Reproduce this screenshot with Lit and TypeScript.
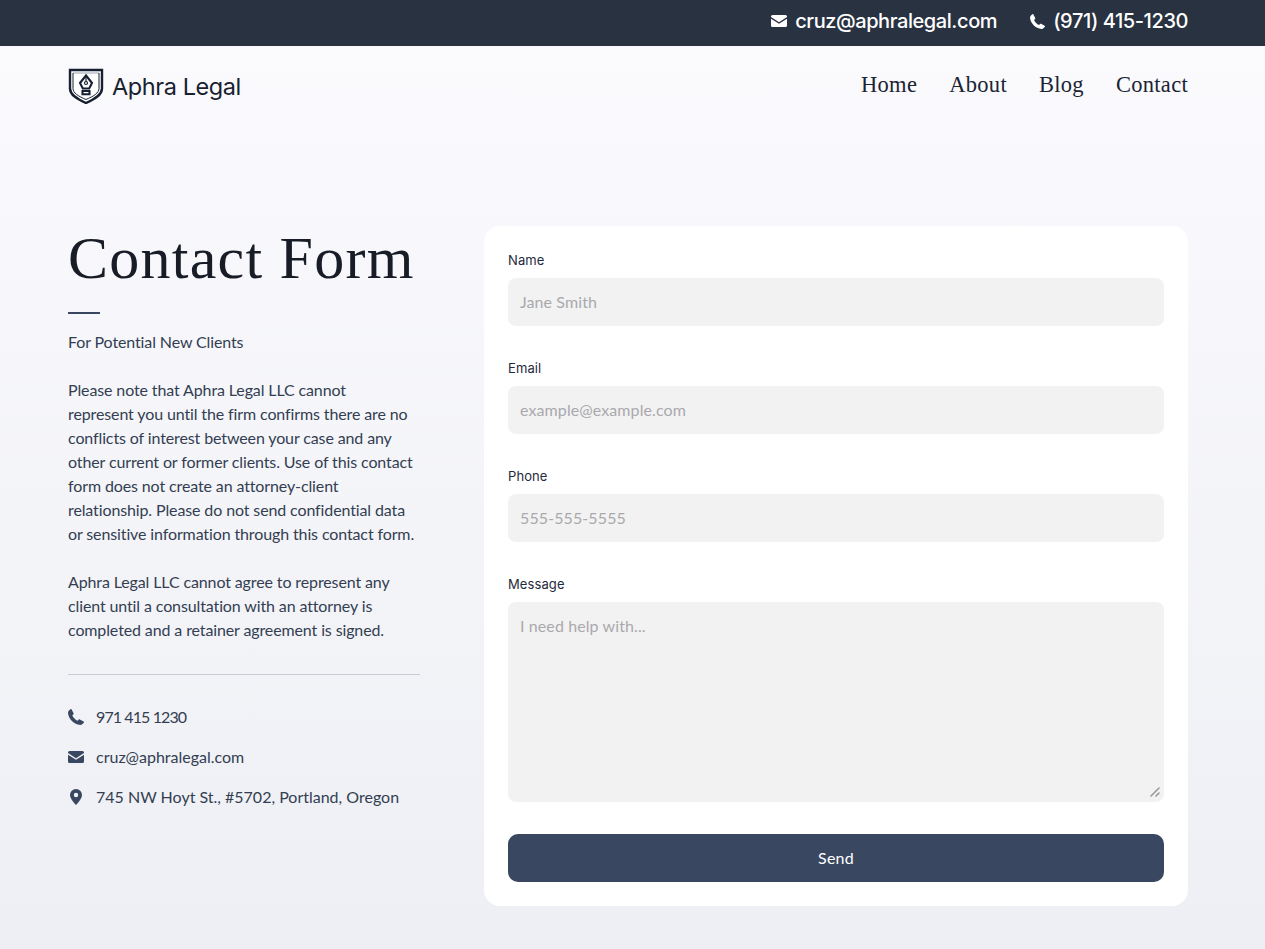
import { LitElement, html, css, svg } from "lit";
import { customElement } from "lit/decorators.js";

const phonePath =
  "M3.600.4l2 3.800c.2.4.1.8-.2 1.100L4.300 6.400c.8 2 3.300 4.500 5.300 5.300l1.100-1.100c.3-.3.7-.4 1.100-.2l3.800 2c.4.2.5.7.3 1.100C14.900 14.700 13.600 16 12.200 16 6 15.600.4 10 0 3.800 0 2.400 1.300 1.100 2.500.2c.4-.3.900-.2 1.100.2z";
const mailTop = "M0 1.500A1.500 1.500 0 0 1 1.500 0h13A1.500 1.500 0 0 1 16 1.500v.6L8 7.200 0 2.100z";
const mailBottom = "M0 3.700V10.500A1.500 1.500 0 0 0 1.500 12h13a1.500 1.500 0 0 0 1.500-1.500V3.700L8 8.800z";
const pinPath =
  "M6 0a6 6 0 0 0-6 6c0 4.200 6 10 6 10s6-5.800 6-10a6 6 0 0 0-6-6zm0 8.200a2.200 2.200 0 1 1 0-4.400 2.200 2.200 0 0 1 0 4.400z";

function icon(kind: string, size: number) {
  if (kind === "phone") {
    return html`<svg width=${size} height=${size} viewBox="0 0 16 16" fill="currentColor">
      ${svg`<path d=${phonePath}></path>`}
    </svg>`;
  }
  if (kind === "pin") {
    return html`<span class="slot"><svg width="12" height="16" viewBox="0 0 12 16" fill="currentColor">
      ${svg`<path fill-rule="evenodd" d=${pinPath}></path>`}
    </svg></span>`;
  }
  return html`<svg width=${size} height=${(size * 12) / 16} viewBox="0 0 16 12" fill="currentColor">
    ${svg`<path d=${mailTop}></path><path d=${mailBottom}></path>`}
  </svg>`;
}

const logo = html`<svg width="36" height="36" viewBox="0 0 36 36" fill="none" stroke="#172030">
  <path d="M2 2h32v18.500c0 6.500-7 10.500-16 14.500C9 31 2 27 2 20.500z" fill="#fff" stroke-width="2.400"></path>
  <path d="M5 5h26" stroke="#9aa1ad" stroke-width="1"></path>
  <path d="M5 5v15.500c0 4.500 5.500 7.800 13 11C25.500 28.300 31 25 31 20.500V5" stroke-width="1"></path>
  <path d="M18 7.500l6 7.500-2.800 5.500h-6.400L12 15z" stroke-width="2.100"></path>
  <path d="M18 8v5.500" stroke-width="1.200"></path>
  <circle cx="18" cy="15" r="1.500" stroke-width="1.200"></circle>
  <path d="M14.500 23h7v3.200h-7z" stroke-width="2.100"></path>
</svg>`;

const fields = [
  { label: "Name", placeholder: "Jane Smith" },
  { label: "Email", placeholder: "example@example.com" },
  { label: "Phone", placeholder: "555-555-5555" },
];

// line breaks follow the original layout, the fallback font wraps differently
const notice = [
  "Please note that Aphra Legal LLC cannot",
  "represent you until the firm confirms there are no",
  "conflicts of interest between your case and any",
  "other current or former clients. Use of this contact",
  "form does not create an attorney-client",
  "relationship. Please do not send confidential data",
  "or sensitive information through this contact form.",
];
const retainer = [
  "Aphra Legal LLC cannot agree to represent any",
  "client until a consultation with an attorney is",
  "completed and a retainer agreement is signed.",
];

@customElement("app-root")
export class AppRoot extends LitElement {
  static styles = css`
    :host {
      display: block;
      min-height: 949px;
      background: linear-gradient(180deg, #fbfbfe 0%, #eeeff4 100%);
      font-family: "Lato", "Liberation Sans", sans-serif;
      color: #333e52;
    }
    .topbar {
      height: 46px;
      box-sizing: border-box;
      padding: 0 77px 4px 68px;
      background: #293241;
      color: #fff;
      display: flex;
      justify-content: flex-end;
      align-items: center;
      gap: 33px;
      font-family: "Inter", sans-serif;
      font-size: 20px;
      font-weight: 500;
      letter-spacing: -0.42px;
    }
    .topbar a {
      display: flex;
      align-items: center;
      gap: 8px;
    }
    .nav {
      height: 80px;
      padding: 0 77px 0 68px;
      display: flex;
      justify-content: space-between;
      align-items: center;
    }
    .brand {
      display: flex;
      align-items: center;
      gap: 8px;
      font-family: "Inter", sans-serif;
      font-size: 23.5px;
      font-weight: 400;
      color: #182130;
      letter-spacing: -0.42px;
    }
    .links {
      display: flex;
      gap: 32px;
      font-family: "Liberation Serif", serif;
      font-size: 22.5px;
      font-weight: 400;
      letter-spacing: 0.3px;
      color: #1b2433;
      margin-top: -2px;
    }
    .main {
      display: flex;
      gap: 64px;
      padding: 100px 77px 43px 68px;
    }
    .intro {
      width: 352px;
      flex: none;
    }
    h1 {
      margin: 0;
      font-family: "Liberation Serif", serif;
      font-weight: 400;
      font-size: 60px;
      letter-spacing: 1.25px;
      line-height: 64px;
      color: #171c26;
      white-space: nowrap;
    }
    .rule {
      width: 32px;
      height: 2px;
      background: #3a4760;
      margin: 22px 0 16px;
    }
    p {
      margin: 0 0 24px;
      font-size: 16px;
      line-height: 24px;
      letter-spacing: -0.12px;
    }
    p span {
      display: block;
      white-space: nowrap;
    }
    hr {
      border: 0;
      border-top: 1px solid #c8ccd4;
      margin: 32px 0 30px;
    }
    .contact {
      display: flex;
      align-items: center;
      gap: 12px;
      height: 24px;
      margin-bottom: 16px;
      font-size: 16px;
      line-height: 24px;
    }
    .contact svg {
      color: #3a4760;
      flex: none;
    }
    .slot {
      width: 16px;
      display: flex;
      justify-content: center;
    }
    .digits {
      letter-spacing: -0.9px;
    }
    .card {
      flex: 1;
      background: #fff;
      border-radius: 16px;
      padding: 24px;
    }
    label {
      display: block;
      height: 20px;
      margin-bottom: 8px;
      font-family: "Inter", sans-serif;
      font-size: 13px;
      line-height: 20px;
      font-weight: 400;
      letter-spacing: 0.1px;
      color: #1f2a3c;
    }
    input,
    textarea {
      display: block;
      width: 100%;
      box-sizing: border-box;
      border: 0;
      outline: 0;
      border-radius: 8px;
      background: #f2f2f2;
      padding: 11px 12px 13px;
      margin: 0 0 32px;
      font-family: "Lato", sans-serif;
      font-size: 16px;
      letter-spacing: 0.1px;
      line-height: 24px;
    }
    input {
      height: 48px;
    }
    textarea {
      height: 200px;
      padding-top: 12px;
      resize: none;
    }
    ::placeholder {
      color: #a9a9ad;
      opacity: 1;
    }
    .message {
      position: relative;
    }
    .grip {
      position: absolute;
      right: 4px;
      bottom: 5px;
      color: #9a9a9e;
    }
    button {
      display: block;
      width: 100%;
      height: 48px;
      border: 0;
      border-radius: 10px;
      padding: 0 0 2px;
      background: #3a4760;
      color: #fff;
      font-family: "Lato", sans-serif;
      font-size: 16px;
      font-weight: 400;
      letter-spacing: 0.2px;
    }
  `;

  render() {
    return html`
      <div class="topbar">
        <a>${icon("mail", 16)}cruz@aphralegal.com</a>
        <a>${icon("phone", 15)}(971) 415-1230</a>
      </div>
      <div class="nav">
        <div class="brand">${logo}Aphra Legal</div>
        <div class="links">
          <span>Home</span><span>About</span><span>Blog</span><span>Contact</span>
        </div>
      </div>
      <div class="main">
        <div class="intro">
          <h1>Contact Form</h1>
          <div class="rule"></div>
          <p>For Potential New Clients</p>
          <p>${notice.map((l) => html`<span>${l}</span>`)}</p>
          <p>${retainer.map((l) => html`<span>${l}</span>`)}</p>
          <hr />
          <div class="contact">${icon("phone", 16)}<span class="digits">971 415 1230</span></div>
          <div class="contact">${icon("mail", 16)}cruz@aphralegal.com</div>
          <div class="contact">${icon("pin", 16)}745 NW Hoyt St., #5702, Portland, Oregon</div>
        </div>
        <form class="card">
          ${fields.map(
            (f) => html`<label>${f.label}</label><input placeholder=${f.placeholder} />`
          )}
          <label>Message</label>
          <div class="message">
            <textarea placeholder="I need help with..."></textarea>
            <svg class="grip" width="10" height="10" viewBox="0 0 10 10" stroke="currentColor" stroke-width="1.600" stroke-linecap="round">
              <path d="M1 9l8-8M6 9l3-3"></path>
            </svg>
          </div>
          <button type="button">Send</button>
        </form>
      </div>
    `;
  }
}
